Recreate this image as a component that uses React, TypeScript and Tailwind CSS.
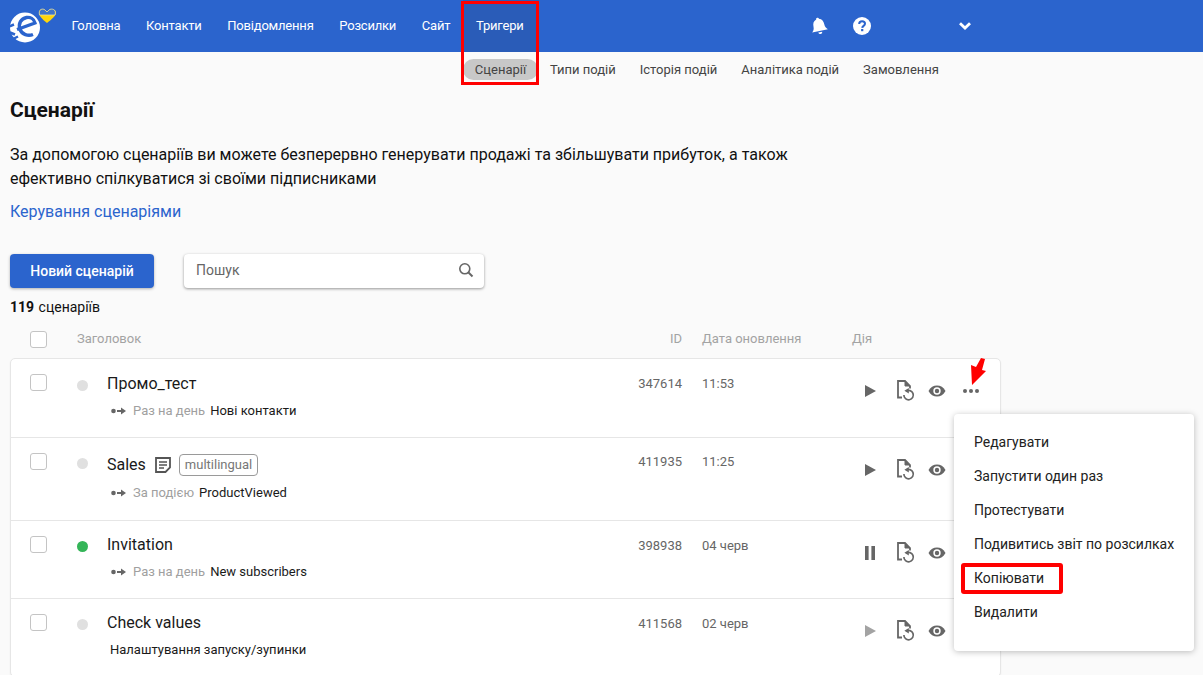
import React from "react";

const nav = ["Головна", "Контакти", "Повідомлення", "Розсилки", "Сайт"];
const sub = ["Типи подій", "Історія подій", "Аналітика подій", "Замовлення"];

function Logo() {
  return (
    <svg width="48" height="44" viewBox="0 0 48 44" className="shrink-0">
      <g transform="translate(0,-2.5)">
        <circle cx="16" cy="26" r="15" fill="#fff" />
        <path d="M8 28 L26 21.5 C25 17 21 15.5 17.5 16 C12 17 9 22 11 28 C13 33 19 35 24 33" fill="none" stroke="#2b64cd" strokeWidth="3.4" />
        <path d="M0 25 L5 23 M1 31 L6 33 M5 37 L9 35" stroke="#2b64cd" strokeWidth="2.5" />
      </g>
      <g transform="translate(0,-2)">
        <path d="M38 21 C33 17 30 14 30 10.5 C30 7 34 6 36 8 L38 10 L40 8 C42 6 47 7 47 10.5 C47 14 43 17 38 21 Z" fill="#ffd60a" />
        <path d="M30.5 13 C29 7 34 6 36 8 L38 10 L40 8 C42 6 48 7 46 13 Z" fill="#3f74c9" stroke="#e8dfa0" strokeWidth="0.8" />
      </g>
    </svg>
  );
}

function Bell() {
  return (
    <svg width="20" height="20" viewBox="0 0 20 20">
      <g transform="rotate(-12 10 10)">
        <path d="M10 1.5 a1.4 1.4 0 0 1 1.4 1.5 C14.5 4 15.5 6.5 15.5 9.5 C15.5 12 16.5 13.5 18 15 L2 15 C3.5 13.5 4.5 12 4.5 9.5 C4.5 6.5 5.5 4 8.6 3 A1.4 1.4 0 0 1 10 1.5 Z" fill="#fff" />
        <path d="M8 16.2 h4 a2 2 0 0 1 -4 0 Z" fill="#fff" />
      </g>
    </svg>
  );
}

function Help() {
  return (
    <svg width="18" height="18" viewBox="0 0 18 18">
      <circle cx="9" cy="9" r="9" fill="#fff" />
      <path d="M6.2 7 C6.2 5.3 7.5 4.3 9.1 4.3 C10.8 4.3 12 5.3 12 6.8 C12 8.9 9.4 8.8 9.2 10.8" fill="none" stroke="#2b64cd" strokeWidth="2" />
      <rect x="8.1" y="12" width="2.2" height="2.2" fill="#2b64cd" />
    </svg>
  );
}

function Chevron() {
  return (
    <svg width="14" height="10" viewBox="0 0 14 10">
      <path d="M2 2.2 L7 7 L12 2.2" fill="none" stroke="#fff" strokeWidth="2.8" />
    </svg>
  );
}

function Search() {
  return (
    <svg width="16" height="16" viewBox="0 0 16 16">
      <circle cx="6.8" cy="6.8" r="5" fill="none" stroke="#666" strokeWidth="1.6" />
      <path d="M10.5 10.5 L14.5 14.5" stroke="#666" strokeWidth="2" />
    </svg>
  );
}

function Flow() {
  return (
    <svg width="16" height="8" viewBox="0 0 16 8" className="shrink-0">
      <circle cx="2.5" cy="4" r="2.3" fill="#666" />
      <path d="M6 4 H12" stroke="#666" strokeWidth="2" />
      <path d="M10 0.5 L15 4 L10 7.5 Z" fill="#666" />
    </svg>
  );
}

function Play({ light }: { light?: boolean }) {
  return (
    <svg width="12" height="14" viewBox="0 0 12 14">
      <path d="M1 1 L12 7 L1 13 Z" fill={light ? "#a3a3a3" : "#666"} />
    </svg>
  );
}

function Pause() {
  return (
    <svg width="12" height="14" viewBox="0 0 12 14">
      <rect x="1" y="0" width="3.6" height="14" fill="#666" />
      <rect x="7.4" y="0" width="3.6" height="14" fill="#666" />
    </svg>
  );
}

function FileRestart() {
  return (
    <svg width="18" height="22" viewBox="0 0 18 22">
      <path d="M5 17.5 H1 V1 H8 L13 6 V8.5" fill="none" stroke="#666" strokeWidth="1.8" />
      <path d="M8 1 L8 6 L13 6 Z" fill="#666" stroke="#666" strokeWidth="1" />
      <path d="M9 11.2 A4.7 4.7 0 1 1 6.9 15" fill="none" stroke="#666" strokeWidth="1.7" />
      <path d="M11.8 8 L7.4 10.8 L11.8 13.6 Z" fill="#666" />
    </svg>
  );
}

function Eye() {
  return (
    <svg width="18" height="12" viewBox="0 0 18 12">
      <path d="M0.5 6 C2.5 2.2 5.5 0.5 9 0.5 C12.5 0.5 15.5 2.2 17.5 6 C15.5 9.8 12.5 11.5 9 11.5 C5.5 11.5 2.5 9.8 0.5 6 Z" fill="#666" />
      <circle cx="9" cy="6" r="3.7" fill="#fff" />
      <circle cx="9" cy="6" r="2.2" fill="#666" />
    </svg>
  );
}

function Dots() {
  return (
    <svg width="18" height="6" viewBox="0 0 18 6">
      <circle cx="3" cy="3" r="2" fill="#666" />
      <circle cx="9" cy="3" r="2" fill="#666" />
      <circle cx="15" cy="3" r="2" fill="#666" />
    </svg>
  );
}

function Note() {
  return (
    <svg width="16" height="16" viewBox="0 0 16 16" className="shrink-0">
      <path d="M1 1 H15 V10.5 L10.5 15 H1 Z" fill="none" stroke="#555" strokeWidth="1.8" />
      <path d="M4 5 H12 M4 8 H12 M4 11 H9" stroke="#555" strokeWidth="1.6" />
    </svg>
  );
}

function Box() {
  return <div className="w-[17px] h-[17px] rounded-[3px] border border-[#c4c4c4] bg-white shrink-0" />;
}

type Row = {
  title: string; tag?: boolean; active?: boolean; kind?: string; target: string;
  id: string; date: string; h: string; ctl: "play" | "pause" | "light";
  pt: string; dotPt: string; titleMt: string; subMt: string; colMt: string; actMt: string;
};

const rows: Row[] = [
  { title: "Промо_тест", kind: "Раз на день", target: "Нові контакти", id: "347614", date: "11:53", h: "h-[78px]", ctl: "play", pt: "pt-[14px]", dotPt: "pt-[7px]", titleMt: "mt-[1px]", subMt: "mt-[8px]", colMt: "mt-[2px]", actMt: "mt-[7px]" },
  { title: "Sales", tag: true, kind: "За подією", target: "ProductViewed", id: "411935", date: "11:25", h: "h-[83px]", ctl: "play", pt: "pt-[14px]", dotPt: "pt-[6px]", titleMt: "mt-[3px]", subMt: "mt-[9px]", colMt: "mt-[1px]", actMt: "mt-[7px]" },
  { title: "Invitation", active: true, kind: "Раз на день", target: "New subscribers", id: "398938", date: "04 черв", h: "h-[78px]", ctl: "pause", pt: "pt-[14px]", dotPt: "pt-[6px]", titleMt: "mt-0", subMt: "mt-[8px]", colMt: "mt-[2px]", actMt: "mt-[7px]" },
  { title: "Check values", target: "Налаштування запуску/зупинки", id: "411568", date: "02 черв", h: "h-[78px]", ctl: "light", pt: "pt-[14px]", dotPt: "pt-[6px]", titleMt: "mt-0", subMt: "mt-[8px]", colMt: "mt-[2px]", actMt: "mt-[7px]" },
];

function TableRow({ r, first, showDots }: { r: Row; first?: boolean; showDots?: boolean }) {
  return (
    <div className={`${r.h} ${r.pt} flex items-start ${first ? "" : "border-t border-[#e6e6e6]"}`}>
      <div className="w-[19px] shrink-0" />
      <div className="w-[47px] shrink-0 pt-[1px]"><Box /></div>
      <div className={`w-[30px] shrink-0 ${r.dotPt}`}>
        <div className={`w-[11px] h-[11px] rounded-full ${r.active ? "bg-[#34b558]" : "bg-[#e0e0e0]"}`} />
      </div>
      <div className="w-[500px] shrink-0">
        <div className={`flex items-center h-[20px] ${r.titleMt} text-[16px] text-[#1a1a1a] gap-[9px]`}>
          <span>{r.title}</span>
          {r.tag && <Note />}
          {r.tag && (
            <span className="-ml-[1px] h-[22px] px-[5px] flex items-center border border-[#9a9a9a] rounded-[4px] text-[13px] text-[#777]">multilingual</span>
          )}
        </div>
        <div className={`flex items-center h-[18px] ${r.subMt} ${r.kind ? "pl-[4px]" : "pl-[3px]"} text-[13px] text-[#1a1a1a]`}>
          {r.kind && <Flow />}
          {r.kind && <span className="ml-[6px] mr-[5px] text-[#a0a0a0]">{r.kind}</span>}
          <span>{r.target}</span>
        </div>
      </div>
      <div className={`w-[75px] shrink-0 text-right text-[13px] leading-[18px] text-[#666] ${r.colMt}`}>{r.id}</div>
      <div className="w-[20px] shrink-0" />
      <div className={`w-[160px] shrink-0 text-[13px] leading-[18px] text-[#666] ${r.colMt}`}>{r.date}</div>
      <div className={`flex items-center h-[22px] ${r.actMt} ml-[1px]`}>
        <div className="w-[14px] flex justify-center">
          {r.ctl === "play" && <Play />}
          {r.ctl === "pause" && <Pause />}
          {r.ctl === "light" && <Play light />}
        </div>
        <div className="ml-[20px]"><FileRestart /></div>
        <div className="ml-[13px]"><Eye /></div>
        {showDots && <div className="ml-[16px]"><Dots /></div>}
      </div>
    </div>
  );
}

export default function App() {
  return (
    <div className="relative w-[1203px] h-[675px] overflow-hidden bg-[#fafafa] text-[#1a1a1a] font-['Roboto',sans-serif]">
      <header className="h-[52px] bg-[#2b64cd] flex items-center text-white pl-[9px]">
        <Logo />
        <nav className="flex items-center h-full w-[467.5px] shrink-0 text-[13px] tracking-[-0.2px] ml-[14.5px]">
          {nav.map((n) => (
            <span key={n} className="mr-[25.7px] shrink-0">{n}</span>
          ))}
          <span className="-ml-[13px] w-[76px] h-full shrink-0 bg-[#2a5cb8] flex items-center pl-[13px]">Тригери</span>
        </nav>
        <div className="ml-[270px]"><Bell /></div>
        <div className="ml-[24px]"><Help /></div>
        <div className="ml-[87px]"><Chevron /></div>
      </header>

      <div className="flex items-center h-[35px] pl-[463px] text-[13px] text-[#444]">
        <span className="w-[75px] h-[21px] rounded-full bg-[#c8c8c8] flex items-center justify-center">Сценарії</span>
        {sub.map((s) => (
          <span key={s} className="ml-[12px] mr-[12px]">{s}</span>
        ))}
      </div>

      <main className="pl-[10px]">
        <h1 className="mt-[11px] text-[21px] leading-[24px] font-bold text-[#111]">Сценарії</h1>
        <p className="mt-[21px] w-[800px] text-[16px] leading-[24px] text-[#111]">
          За допомогою сценаріїв ви можете безперервно генерувати продажі та збільшувати прибуток, а також ефективно спілкуватися зі своїми підписниками
        </p>
        <a className="block mt-[9px] text-[16px] leading-[24px] text-[#2b64cd]">Керування сценаріями</a>

        <div className="flex items-start mt-[30px]">
          <button className="w-[144px] h-[34px] rounded-[4px] bg-[#2b64cd] text-white text-[14px] font-medium shadow-[0_1px_3px_rgba(0,0,0,0.3)]">Новий сценарій</button>
          <div className="ml-[30px] w-[300px] h-[34px] rounded-[4px] bg-white shadow-[0_1px_3px_rgba(0,0,0,0.4)] flex items-center justify-between pl-[12px] pr-[10px] pb-[2px] text-[14px] text-[#666]">
            <span>Пошук</span>
            <Search />
          </div>
        </div>

        <div className="mt-[9px] text-[14px] leading-[20px] text-[#111]"><b>119</b> <span className="ml-[1px]">сценаріїв</span></div>

        <div className="flex items-center h-[24px] mt-[10px] text-[13px] text-[#a3a3a3]">
          <div className="w-[20px]" />
          <div className="w-[47px]"><Box /></div>
          <div className="w-[530px]">Заголовок</div>
          <div className="w-[75px] text-right">ID</div>
          <div className="w-[20px]" />
          <div className="w-[150px]">Дата оновлення</div>
          <div>Дія</div>
        </div>

        <div className="mt-[7px] w-[991px] bg-white border border-[#e6e6e6] rounded-[5px] shadow-[0_1px_2px_rgba(0,0,0,0.06)]">
          {rows.map((r, i) => (
            <TableRow key={r.id} r={r} first={i === 0} showDots={i === 0} />
          ))}
        </div>
      </main>

      {/* overlays */}
      <div className="absolute left-[954px] top-[414px] w-[240px] h-[237px] bg-white rounded-[4px] shadow-[0_1px_6px_rgba(0,0,0,0.25)] pt-[11px] pl-[20px] text-[14px] text-[#222]">
        {["Редагувати", "Запустити один раз", "Протестувати", "Подивитись звіт по розсилках", "Копіювати", "Видалити"].map((m) => (
          <div key={m} className="h-[34px] flex items-center">{m}</div>
        ))}
      </div>
      <div className="absolute left-[461px] top-[1px] w-[78px] h-[84px] border-[3px] border-[#ff0000]" />
      <div className="absolute left-[961px] top-[563px] w-[102px] h-[31px] border-[4px] border-[#ff0000] rounded-[3px]" />
      <svg className="absolute left-[968px] top-[356px]" width="20" height="30" viewBox="0 0 20 30">
        <path d="M4 29 L3 9 L8 11 L13 2 L17 3 L14 14 L18 15 Z" fill="#ff0000" />
      </svg>
    </div>
  );
}
